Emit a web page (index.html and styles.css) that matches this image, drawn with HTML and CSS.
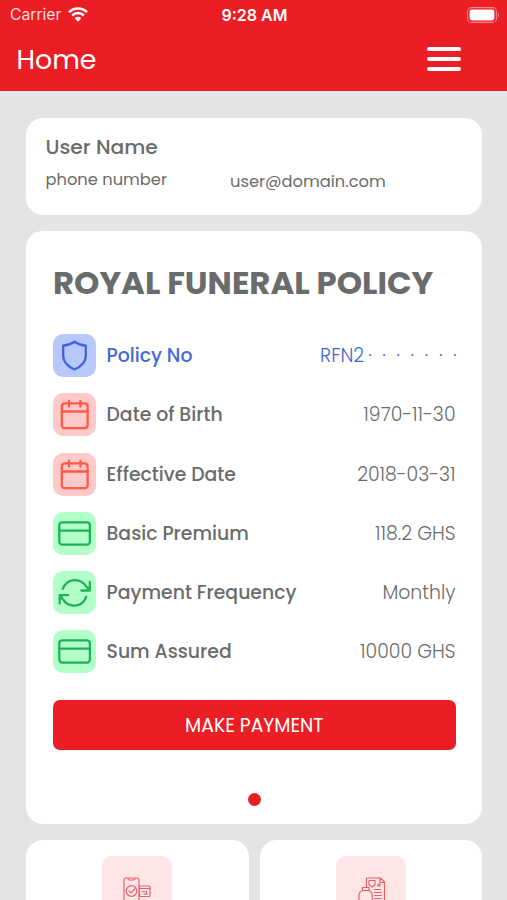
FILE: index.html
```html
<!DOCTYPE html>
<html lang="en">
<head>
<meta charset="utf-8">
<title>Home</title>
<link rel="stylesheet" href="styles.css">
</head>
<body>
<header class="header">
  <div class="status">
    <div class="carrier"><span class="carrier-name">Carrier</span>
      <svg class="wifi" viewBox="0 0 20 15"><path d="M1 5.2a12.7 12.7 0 0 1 18 0M4.2 8.5a8.2 8.2 0 0 1 11.6 0" fill="none" stroke="currentColor" stroke-width="2.5"/><path d="M6.7 11.2a4.7 4.7 0 0 1 6.6 0L10 14.7z" fill="currentColor"/></svg>
    </div>
    <span class="time">9:28 AM</span>
    <svg class="battery" viewBox="0 0 33 16"><rect x=".6" y=".6" width="28.8" height="14.8" rx="4" fill="none" stroke="#f58489" stroke-width="1.1"/><rect x="2.6" y="2.6" width="24.8" height="10.8" rx="2.4" fill="#fff"/><path d="M31 5.5q2 2.5 0 5z" fill="#f58489"/></svg>
  </div>
  <div class="navbar">
    <h1 class="page-title">Home</h1>
    <div class="menu"><i></i><i></i><i></i></div>
  </div>
</header>
<main class="content">
  <section class="card user">
    <div class="user-name">User Name</div>
    <div class="user-row"><span>phone number</span><span class="email">user@domain.com</span></div>
  </section>
  <section class="card policy">
    <h2 class="policy-title">ROYAL FUNERAL POLICY</h2>
    <div class="rows">
      <div class="row active">
        <div class="badge blue"><svg viewBox="0 0 43 43"><path d="M21.500 7.700c3.600 2.600 7.300 3.600 11.300 3.900v10.300c0 6.400-4.600 10.400-11.300 13.600-6.700-3.200-11.300-7.200-11.300-13.600V11.600c4-.3 7.700-1.300 11.300-3.900z"/></svg></div>
        <span class="label">Policy No</span><span class="value">RFN2</span><span class="mask">·······</span>
      </div>
      <div class="row">
        <div class="badge red"><svg viewBox="0 0 43 43"><rect x="8.800" y="10.300" width="25.800" height="24.900" rx="3"/><path d="M8.800 18.500h25.800M16 8v5.500M27.400 8v5.500"/></svg></div>
        <span class="label">Date of Birth</span><span class="value">1970-11-30</span>
      </div>
      <div class="row">
        <div class="badge red"><svg viewBox="0 0 43 43"><rect x="8.800" y="10.300" width="25.800" height="24.900" rx="3"/><path d="M8.800 18.500h25.800M16 8v5.500M27.400 8v5.500"/></svg></div>
        <span class="label">Effective Date</span><span class="value">2018-03-31</span>
      </div>
      <div class="row">
        <div class="badge green"><svg viewBox="0 0 43 43"><rect x="6.300" y="10.300" width="30.600" height="22.300" rx="3"/><path d="M6.300 18.700h30.600"/></svg></div>
        <span class="label">Basic Premium</span><span class="value">118.2 GHS</span>
      </div>
      <div class="row">
        <div class="badge green"><svg viewBox="0 0 43 43"><path d="M36.800 10.900v8.600h-8.400M6.700 32.600v-8.400h8.400M9.800 17.800c4.200-11 17.500-11.600 23.800-2l3 3.400M33.300 25.800c-4.200 11-17.500 11.600-23.800 2l-2.600-3.400"/></svg></div>
        <span class="label">Payment Frequency</span><span class="value">Monthly</span>
      </div>
      <div class="row">
        <div class="badge green"><svg viewBox="0 0 43 43"><rect x="6.300" y="10.300" width="30.600" height="22.300" rx="3"/><path d="M6.300 18.700h30.600"/></svg></div>
        <span class="label">Sum Assured</span><span class="value">10000 GHS</span>
      </div>
    </div>
    <button class="pay">MAKE PAYMENT</button>
    <div class="dot"></div>
  </section>
  <section class="tiles">
    <div class="card tile"><div class="tile-icon"><svg viewBox="0 0 70 70"><rect x="22" y="22" width="15" height="30" rx="2"/><path d="M26 22.500q0 1.500 1.500 1.500h4q1.500 0 1.500-1.500M27 34.800l2 2 3.700-3.800"/><circle cx="29.500" cy="35" r="5.300"/><rect x="37.500" y="30" width="10.500" height="10.500" rx="1"/><path d="M37.500 32.500H48M40 35.500h3M44.500 35v3.500M42 38h3"/></svg></div></div>
    <div class="card tile"><div class="tile-icon"><svg viewBox="0 0 70 70"><path d="M30.500 31v-9h14l4 4v25H36M44 22v4.500h4.500M33 24.500h6v4.500l-3 2-3-2zM38.500 33.500h6M38.500 36.500h7M38.500 39.500h7M38.500 42.500h7M42 28h2v2h-2z"/><path d="M26.500 31.500h6.500v3.200c2.500.8 3.200 2.300 3.200 4.300v13H23V39c0-2 1-3.500 3.500-4.300zM26.500 34.500H33"/></svg></div></div>
  </section>
</main>
</body>
</html>
```
FILE: styles.css
```css
* { box-sizing: border-box; margin: 0; padding: 0; }
body { width: 507px; height: 900px; overflow: hidden; background: #e4e4e4; color: #6a6b6b; font-family: Poppins, Inter, sans-serif; }
.header { height: 91px; background: #eb1d25; color: #fff; }
.status { height: 29px; display: grid; grid-template-columns: 1fr auto 1fr; align-items: center; padding: 0 8px 0 10px; font-family: Inter, sans-serif; }
.carrier { display: flex; align-items: center; gap: 7px; }
.carrier-name { font-size: 15.700px; color: #ffdcdd; }
.wifi { width: 20px; height: 15px; }
.time { font-size: 16px; font-weight: 600; }
.battery { width: 33px; height: 16px; justify-self: end; margin-right: -1px; }
.navbar { height: 62px; display: flex; justify-content: space-between; padding: 0 46px 0 16.500px; }
.page-title { font-size: 26.800px; font-weight: 400; line-height: 62px; }
.menu { display: flex; flex-direction: column; gap: 6px; padding-top: 18px; }
.menu i { width: 34px; height: 4px; border-radius: 2px; background: #fff; }
.content { padding: 27px 25px 0 26px; }
.card { background: #fff; border-radius: 17px; }
.user { height: 97px; padding: 16px 19.500px; }
.user-name { font-size: 20.300px; line-height: 26px; font-weight: 500; }
.user-row { display: grid; grid-template-columns: 184.500px 1fr; font-size: 16.300px; margin-top: 9px; line-height: 22px; }
.email { padding-top: 2px; }
.policy { height: 592.500px; margin-top: 16px; padding: 32.500px 26.500px 0 27px; }
.policy-title { font-size: 32.300px; font-weight: 700; line-height: 38px; white-space: nowrap; }
.rows { display: grid; gap: 16.300px; margin-top: 32.500px; }
.row { height: 43px; display: flex; align-items: center; font-size: 18.850px; line-height: 29px; white-space: nowrap; }
.badge { width: 43px; height: 43px; border-radius: 10px; margin-right: 10.500px; }
.badge svg, .tile-icon svg { display: block; fill: none; stroke: currentColor; stroke-width: 2.300; stroke-linejoin: round; stroke-linecap: round; }
.blue { background: #b9c8fb; color: #3c64dc; }
.red { background: #ffc9c9; color: #ff5a47; }
.green { background: #b3ffca; color: #1fb157; }
.label { font-weight: 500; }
.value { margin-left: auto; font-weight: 300; }
.mask { letter-spacing: 10.700px; font-weight: 300; margin: 0 -11.700px 0 4px; }
.active { color: #4468d8; }
.pay { display: block; width: 100%; height: 50px; margin-top: 27px; border: 0; border-radius: 7px; background: #eb1d25; color: #fff; font: 400 18.800px Poppins, Inter, sans-serif; }
.dot { width: 13px; height: 13px; border-radius: 50%; background: #eb1d25; margin: 43px auto 0; }
.tiles { display: grid; grid-template-columns: 1fr 1fr; gap: 11px; margin-top: 16px; }
.tile { height: 60px; padding-top: 16px; overflow: hidden; border-radius: 17px 17px 0 0; }
.tile-icon { width: 70px; height: 70px; margin: auto; border-radius: 10px; background: #ffe5e5; color: #e4636b; }
.tile-icon svg { stroke-width: 1.200; }
```
